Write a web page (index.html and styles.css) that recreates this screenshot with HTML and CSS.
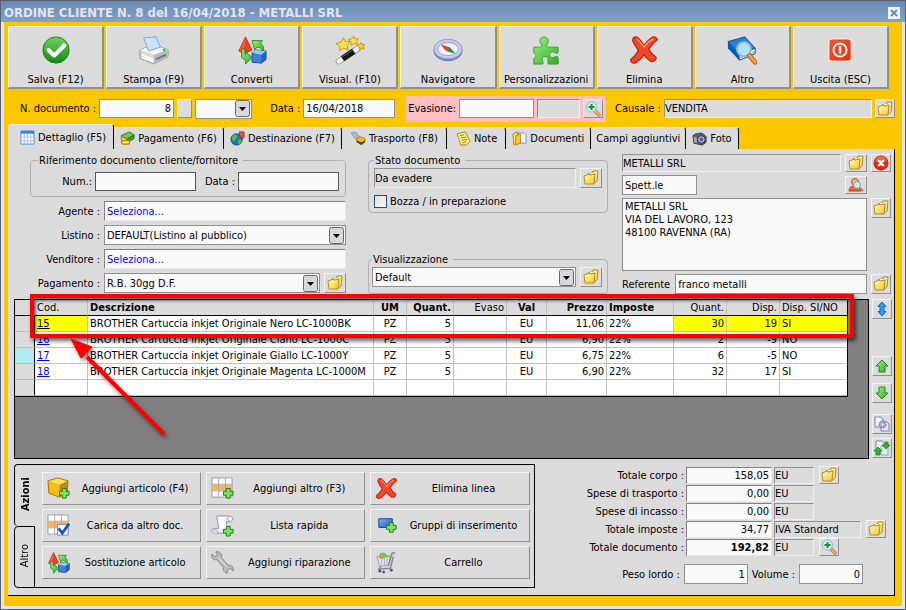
FILE: index.html
```html
<!DOCTYPE html>
<html lang="it">
<head>
<meta charset="utf-8">
<title>Ordine cliente</title>
<link rel="stylesheet" href="styles.css">
</head>
<body>
<svg class="sprite" aria-hidden="true">
  <defs>
    <linearGradient id="g-green" x1="0" y1="0" x2="0" y2="1"><stop offset="0" stop-color="#6fd35a"/><stop offset="1" stop-color="#0f8a18"/></linearGradient>
    <linearGradient id="g-lime" x1="0" y1="0" x2="1" y2="1"><stop offset="0" stop-color="#a4ee7c"/><stop offset="1" stop-color="#2fae2b"/></linearGradient>
    <linearGradient id="g-red" x1="0" y1="0" x2="1" y2="1"><stop offset="0" stop-color="#ff8a68"/><stop offset="1" stop-color="#dd2306"/></linearGradient>
    <linearGradient id="g-blue" x1="0" y1="0" x2="1" y2="1"><stop offset="0" stop-color="#7fb8f2"/><stop offset="1" stop-color="#1a55b4"/></linearGradient>
    <linearGradient id="g-gold" x1="0" y1="0" x2="1" y2="1"><stop offset="0" stop-color="#fffbc0"/><stop offset="1" stop-color="#f2c62c"/></linearGradient>
  </defs>
  <symbol id="i-ok" viewBox="0 0 32 32"><circle cx="16" cy="16" r="14" fill="url(#g-green)" stroke="#1f7d22"/><path d="M8 16l6 6L25 11" fill="none" stroke="#fff" stroke-width="4.5" stroke-linecap="round" stroke-linejoin="round"/></symbol>
  <symbol id="i-print" viewBox="0 0 32 32"><path d="M1 16l9-4 4 3 8-3 9 4v7l-15 8-15-6z" fill="#d9d9dc" stroke="#98989c"/><path d="M1 16l15 5 15-5-8-3-9 3-5-3z" fill="#f6f6f7"/><path d="M5 3l13-1 5 11-13 4z" fill="#c9e2fb" stroke="#7fa3cf"/><path d="M16 21l15-5v7l-15 8z" fill="#b9b9be"/><path d="M3 21l12 5M3 24l12 4" stroke="#fff" stroke-width="2"/><path d="M18 26l11-5" stroke="#77777d" stroke-width="2"/><circle cx="27" cy="16" r="1.5" fill="#35bd2a"/></symbol>
  <symbol id="i-convert" viewBox="0 0 32 32"><path d="M9 2L2 17l6 3 8-4z" fill="url(#g-red)" stroke="#c0301c"/><path d="M9 2l-1 18 8-4z" fill="#e8411f"/><path d="M16 19l4-3 11 1v9l-5 4-10-1z" fill="#3f7fd9" stroke="#1c4b9c"/><path d="M16 19l4-3 11 1-5 4z" fill="#9cc6f7"/><path d="M26 21l5-4v9l-5 4z" fill="#235fb8"/><path d="M5 15v9l4 3v4l7-7-7-6v3l-1-6z" fill="url(#g-lime)" stroke="#1f8a22"/><path d="M16 6h11l-2 3c3 2 4 4 3 8-2-3-4-4-7-4l-2 3z" fill="url(#g-lime)" stroke="#1f8a22"/></symbol>
  <symbol id="i-wand" viewBox="0 0 32 32"><path d="M4 28L25 14" stroke="#8d8d8d" stroke-width="6.5" stroke-linecap="round"/><path d="M4 28L25 14" stroke="#f4f4f4" stroke-width="5" stroke-linecap="round"/><path d="M8 25.300L20 17.300" stroke="#181818" stroke-width="6.500"/><path d="M8 23l11-7" stroke="#666" stroke-width="1"/><path d="M9 3l2 4 5 0-3 4 1 5-5-2-4 3 0-5-4-3 5-1z" fill="#ffe14a" stroke="#c99400"/><path d="M20 1l1 3 4 0-2 3 1 3-4-1-3 2 0-4-3-2 4-1z" fill="#ffe14a" stroke="#c99400"/><path d="M28 8l1 2 3 0-2 2 1 3-3-1-2 2 0-3-2-2 3-1z" fill="#ffd42a" stroke="#c99400"/></symbol>
  <symbol id="i-compass" viewBox="0 0 32 32"><ellipse cx="16" cy="17" rx="15" ry="10.500" fill="#8587c2" stroke="#7072a8"/><ellipse cx="16" cy="15" rx="15" ry="10.500" fill="#c8caee" stroke="#8f91c8"/><ellipse cx="16" cy="15" rx="11" ry="7" fill="#eef2fd" stroke="#9a9cce"/><path d="M8 10l10 3-4 4z" fill="#ef3b2a"/><path d="M24 20l-10-3 4-4z" fill="#1f8f36"/></symbol>
  <symbol id="i-puzzle" viewBox="0 0 32 32"><path d="M3 13h7c2 0 2-1 1-3-3-4-1-8 3-8s6 4 3 8c-1 2 0 3 2 3h10v5c0 2-1 2-3 1-3-2-6-1-6 2s3 4 6 2c2-1 3 0 3 2v6h-10c-1 0-1-1-1-2 1-3 0-6-3-6s-4 3-2 6c0 1 0 2-1 2H3v-6c3-2 3-4 0-6z" fill="url(#g-lime)" stroke="#35a02f"/></symbol>
  <symbol id="i-x" viewBox="0 0 32 32"><path d="M8 2c3 2 6 6 8 9 3-4 6-7 10-9 3 0 4 2 4 3-4 3-7 7-9 10 2 4 5 7 8 9 0 3-3 5-6 4-3-2-6-5-7-7-3 4-6 7-10 9-3 0-5-2-4-4 4-3 7-7 8-10-3-4-5-7-6-10 0-3 2-4 4-4z" fill="#f0482a" stroke="#c4260c" stroke-width="1.500"/><path d="M8 4c3 2 6 6 8 9 3-4 6-7 10-9" fill="none" stroke="#ff967a" stroke-width="1.500"/></symbol>
  <symbol id="i-book" viewBox="0 0 32 32"><path d="M1 7l18-5 11 12-17 7z" fill="#2c7fd6" stroke="#0d4b9e"/><path d="M1 7v7l12 13 0-6z" fill="#0d57b0"/><path d="M13 21l17-7v6l-17 7z" fill="#e8f2fc" stroke="#0d4b9e"/><path d="M13 25l17-7" stroke="#7aa3cf"/><circle cx="18" cy="15" r="7.500" fill="#c4ecfa" fill-opacity=".9" stroke="#8ab8d3" stroke-width="2"/><path d="M24 22l6 7" stroke="#b95a12" stroke-width="5" stroke-linecap="round"/><path d="M24 22l6 7" stroke="#ffa04c" stroke-width="3" stroke-linecap="round"/></symbol>
  <symbol id="i-power" viewBox="0 0 32 32"><rect x="4" y="4" width="24" height="24" rx="3" fill="url(#g-red)" stroke="#f8e3de" stroke-width="1.500"/><rect x="5" y="5" width="22" height="22" rx="2" fill="#dd3c18" fill-opacity=".6"/><circle cx="16" cy="16" r="7" fill="none" stroke="#fff" stroke-width="2"/><path d="M16 12v8" stroke="#fff" stroke-width="2.500"/></symbol>
  <symbol id="i-folder" viewBox="0 0 16 16"><path d="M5 4l4-1 1-2 5 0-1 10-4 3z" fill="#fbe27a" stroke="#b98c1c"/><path d="M7 3.500h3l1-1h3" stroke="#fffad0"/><path d="M1 6l3-1 1-1 2 1 5-1-1 10-9 0z" fill="url(#g-gold)" stroke="#b98c1c"/></symbol>
  <symbol id="i-find" viewBox="0 0 16 16"><path d="M9.500 9.500l4.500 4.500" stroke="#b8763f" stroke-width="3.500" stroke-linecap="round"/><path d="M10 10l4 4" stroke="#f8ac7b" stroke-width="2" stroke-linecap="round"/><circle cx="6.500" cy="6" r="5" fill="#d9f1fb" stroke="#88b5d0"/><path d="M6.500 3v6M3.500 6h6" stroke="#189427" stroke-width="2"/></symbol>
  <symbol id="i-cancel" viewBox="0 0 16 16"><circle cx="8" cy="8" r="7" fill="#e32d12" stroke="#b51808"/><path d="M2 7a6 6 0 0 1 12 0c-4-2-8-2-12 0z" fill="#ff8a68" fill-opacity=".6"/><path d="M6 6l4 4M10 6l-4 4" stroke="#fff" stroke-width="2.500" stroke-linecap="round"/></symbol>
  <symbol id="i-user" viewBox="0 0 16 16"><path d="M1 14c0-4 3-5 6-5s6 2 6 5z" fill="#f0622c" stroke="#b33c12"/><circle cx="7" cy="5" r="3.500" fill="#f5b676" stroke="#a95b25"/><circle cx="9" cy="8" r="3.500" fill="#c9eafa" stroke="#6c9cc0"/><path d="M12 11l3 3" stroke="#d97a2f" stroke-width="2"/></symbol>
  <symbol id="i-sheet" viewBox="0 0 16 16"><path d="M1 1h14v14H1z" fill="#fff" stroke="#4c8fe0"/><path d="M1 1h14v3H1z" fill="#2f86e8"/><path d="M1 7.500h14M1 11.500h14M4.500 4v11M8 4v11M11.500 4v11" stroke="#a9c0e4"/></symbol>
  <symbol id="i-money" viewBox="0 0 16 16"><path d="M1 5l9-4 5 3-8 5z" fill="#6ec94f" stroke="#2b7a1c"/><path d="M7 9l8-5v4l-8 5z" fill="#3f9a30" stroke="#2b7a1c"/><path d="M1 6l6 2v6l-5-1z" fill="#f6d84c" stroke="#a87c08"/><path d="M2 10h8v4H2z" fill="#f4cf36" stroke="#a87c08"/><path d="M3 12h6" stroke="#fff3a8"/></symbol>
  <symbol id="i-globe" viewBox="0 0 16 16"><circle cx="7" cy="9" r="6" fill="#2270c4" stroke="#174a86"/><path d="M3 5c3-2 5-1 5 1s-3 2-3 5c-3-1-4-3-2-6zM9 9l3 0c1 3-1 4-2 5-2-1-2-3-1-5z" fill="#4fc046"/><path d="M10 1h5v5l-2 3-1-3-2-1z" fill="#ef5a32" stroke="#a92c12"/></symbol>
  <symbol id="i-truck" viewBox="0 0 16 16"><path d="M0 2l5-1 4 5-4 3z" fill="#b7b7b7" stroke="#9a9a9a"/><path d="M6 8l4-2 5 2v3l-4 3-5-3z" fill="#f6b52a" stroke="#b27a10"/><path d="M6 10l5 2 4-2v2l-4 3-5-3z" fill="#5c4225"/></symbol>
  <symbol id="i-note" viewBox="0 0 16 16"><path d="M1 3l9-2 5 10-4 4-6 0z" fill="#fff07c" stroke="#a38713"/><path d="M4 5l5-1M5 7.500l6-1M6 10l6-1M7 12.500l4-1" stroke="#957d1c"/></symbol>
  <symbol id="i-docs" viewBox="0 0 16 16"><path d="M1 3l5-2v11l-4 3z" fill="#ffe172" stroke="#b8860b"/><path d="M7 2h6l2 2v9H7z" fill="#eaf3fd" stroke="#7a95bb"/><path d="M4 5l5-2v10l-5 2z" fill="#f6cc3c" stroke="#b8860b"/></symbol>
  <symbol id="i-camera" viewBox="0 0 16 16"><path d="M1 5l3-2 3 0 1-1 4 1 3 3v6l-4 3-9-2z" fill="#62626c" stroke="#34343c"/><path d="M2 6l3 1v6l-3-1z" fill="#a4a4b4"/><circle cx="10" cy="9" r="4" fill="#b4b8d8" stroke="#2f2f3a"/><circle cx="10" cy="9" r="2" fill="#5560a0"/></symbol>
  <symbol id="i-updown" viewBox="0 0 16 16"><path d="M8 1l4 4.500h-2v5h2L8 15l-4-4.500h2v-5H4z" fill="#2f9df4" stroke="#1665b8"/></symbol>
  <symbol id="i-up" viewBox="0 0 16 16"><path d="M8 2l6 6h-3v6H5V8H2z" fill="url(#g-lime)" stroke="#1d8c1b"/></symbol>
  <symbol id="i-down" viewBox="0 0 16 16"><path d="M8 14l6-6h-3V2H5v6H2z" fill="url(#g-lime)" stroke="#1d8c1b"/></symbol>
  <symbol id="i-gear" viewBox="0 0 16 16"><path d="M1 1h6l2 2v8H1z" fill="#f2f7ff" stroke="#6d86b8"/><path d="M7 6h6l2 2v7H7z" fill="#e4edfb" stroke="#6d86b8"/><circle cx="8.500" cy="8.500" r="3.500" fill="#a9a9d4" stroke="#62629a" stroke-dasharray="2 1"/><circle cx="8.500" cy="8.500" r="1" fill="#fff"/></symbol>
  <symbol id="i-swap" viewBox="0 0 16 16"><path d="M2 1h6l2 2v8H2z" fill="#f2f7ff" stroke="#6d86b8"/><path d="M7 6h7v9H7z" fill="#e4edfb" stroke="#8da2c8"/><path d="M4 7l4 4H6v4H2v-4H0zM12 9l4-4h-2V2h-3v3H8z" fill="#31b52b" stroke="#187a18" stroke-width=".7"/></symbol>
  <symbol id="i-plus" viewBox="0 0 12 12"><path d="M4 1h4v3h3v4H8v3H4V8H1V4h3z" fill="#7be45c" stroke="#12801a"/></symbol>
  <symbol id="i-box" viewBox="0 0 24 24"><path d="M1 4l10-3 11 3-9 4z" fill="#ffe45a"/><path d="M1 4l12 4v13L2 17z" fill="#f2bd14"/><path d="M13 8l9-4-1 12-8 5z" fill="#c58a05"/><path d="M1 4l10-3 11 3-1 12-8 5L2 17z" fill="none" stroke="#a87406"/><use href="#i-plus" x="12" y="11" width="12" height="12"/></symbol>
  <symbol id="i-gridadd" viewBox="0 0 24 24"><path d="M1 1h21v20H1z" fill="#fff" stroke="#9b9bab"/><path d="M1 8h21v6H1z" fill="#ffb452"/><path d="M1 7.500h21M1 14.500h21M8 1v20M15 1v20" stroke="#a9a9b5"/><use href="#i-plus" x="12" y="11" width="12" height="12"/></symbol>
  <symbol id="i-gridok" viewBox="0 0 24 24"><path d="M1 1h21v20H1z" fill="#fff" stroke="#9b9bab"/><path d="M1 8h21v6H1z" fill="#ffb452"/><path d="M1 7.500h21M1 14.500h21M8 1v20M15 1v20" stroke="#a9a9b5"/><path d="M11 11h11v11H11z" fill="#fff" stroke="#7a8aa8"/><path d="M12 15l4 5 7-10" fill="none" stroke="#1457c0" stroke-width="3"/></symbol>
  <symbol id="i-scroll" viewBox="0 0 24 24"><path d="M6 2h13c5 0 5 6 0 6h-3l2 12H5c-5 0-6-5-2-5h5z" fill="#eef0fa" stroke="#9497ae"/><path d="M8 3h7l1 12H9z" fill="#fff"/><path d="M19 3c-3 0-2 4 0 4M2 17c3-1 6 0 5 3" fill="none" stroke="#9497ae"/><use href="#i-plus" x="12" y="12" width="12" height="12"/></symbol>
  <symbol id="i-wrench" viewBox="0 0 24 24"><path d="M5 1c4-1 7 2 6 6l7 8c4-1 6 3 5 6l-3-3-3 2 0 3c-3 0-5-3-4-6L6 9C2 10 0 7 1 3l3 3 3-2z" fill="#bdbdbd" stroke="#868686"/><path d="M8 7l9 10" stroke="#eee"/></symbol>
  <symbol id="i-group" viewBox="0 0 24 24"><path d="M4 5h14v9H4z" fill="url(#g-blue)" stroke="#123f8c"/><use href="#i-plus" x="11" y="8" width="12" height="12"/></symbol>
  <symbol id="i-cart" viewBox="0 0 24 24"><path d="M2 6l14-1-2 10-9 1z" fill="#e6e2f6" stroke="#9a98ac"/><path d="M4 5c2-5 7-4 8-1l4 2-11 2z" fill="#5fd048"/><path d="M5 5h4v3H5z" fill="#f58a3c"/><path d="M14 15l4-13h3M6 16l-2 3 12-1 3-12" fill="none" stroke="#85858f" stroke-width="1.500"/><path d="M7 7v8M10 7v8M13 7l-1 8" stroke="#b3b0cc"/><circle cx="5" cy="21" r="1.500" fill="#55555c"/><circle cx="9" cy="22" r="1.500" fill="#55555c"/><circle cx="17" cy="20" r="1.500" fill="#55555c"/></symbol>
</svg>

<div class="window">
  <header class="titlebar">
    <h1>ORDINE CLIENTE N. 8 del 16/04/2018 - METALLI SRL</h1>
    <button class="close" aria-label="Chiudi"><svg viewBox="0 0 12 12"><path d="M3 3l6 6M9 3l-6 6" stroke="#6c8cb4" stroke-width="2"/></svg></button>
  </header>
  <main class="body">
    <nav class="toolbar">
      <button><svg><use href="#i-ok"/></svg>Salva (F12)</button>
      <button><svg><use href="#i-print"/></svg>Stampa (F9)</button>
      <button><svg><use href="#i-convert"/></svg>Converti</button>
      <button><svg><use href="#i-wand"/></svg>Visual. (F10)</button>
      <button><svg><use href="#i-compass"/></svg>Navigatore</button>
      <button><svg><use href="#i-puzzle"/></svg>Personalizzazioni</button>
      <button><svg><use href="#i-x"/></svg>Elimina</button>
      <button><svg><use href="#i-book"/></svg>Altro</button>
      <button><svg><use href="#i-power"/></svg>Uscita (ESC)</button>
    </nav>

    <div class="docbar">
      <div class="doc-number">
        <label for="ndoc">N. documento :</label>
        <input id="ndoc" class="num w-number" value="8">
        <button class="blank" aria-label="Numerazione"></button>
        <select class="w-series" aria-label="Serie"><option></option></select>
      </div>
      <div class="doc-date">
        <label for="date">Data :</label>
        <input id="date" class="w-date" value="16/04/2018">
      </div>
      <div class="evasion">
        <label for="eva">Evasione:</label>
        <input id="eva" class="w-number">
        <input class="locked w-state" readonly aria-label="Stato evasione">
        <button class="icon" aria-label="Cerca evasione"><svg><use href="#i-find"/></svg></button>
      </div>
      <div class="reason">
        <label for="cau">Causale :</label>
        <input id="cau" class="locked grow" readonly value="VENDITA">
        <button class="icon" aria-label="Scegli causale"><svg><use href="#i-folder"/></svg></button>
      </div>
    </div>

    <div class="tabs" role="tablist">
      <button role="tab" class="selected" aria-selected="true"><svg><use href="#i-sheet"/></svg>Dettaglio (F5)</button>
      <button role="tab"><svg><use href="#i-money"/></svg>Pagamento (F6)</button>
      <button role="tab"><svg><use href="#i-globe"/></svg>Destinazione (F7)</button>
      <button role="tab" class="roomy"><svg><use href="#i-truck"/></svg>Trasporto (F8)</button>
      <button role="tab" class="roomy"><svg><use href="#i-note"/></svg>Note</button>
      <button role="tab"><svg><use href="#i-docs"/></svg>Documenti</button>
      <button role="tab" class="plain">Campi aggiuntivi</button>
      <button role="tab"><svg><use href="#i-camera"/></svg>Foto</button>
    </div>

    <section class="panel">
      <div class="details">
        <div class="refs">
          <fieldset class="ref-doc">
            <legend>Riferimento documento cliente/fornitore</legend>
            <label for="rnum">Num.:</label><input id="rnum" class="dark">
            <label for="rdat">Data :</label><input id="rdat" class="dark">
          </fieldset>
          <div class="line"><label for="age">Agente :</label><input id="age" class="sunken link grow" value="Seleziona..."></div>
          <div class="line"><label for="lis">Listino :</label><select id="lis" class="grow"><option>DEFAULT(Listino al pubblico)</option></select></div>
          <div class="line"><label for="ven">Venditore :</label><input id="ven" class="sunken link grow" value="Seleziona..."></div>
          <div class="line"><label for="pag">Pagamento :</label><select id="pag" class="grow"><option>R.B. 30gg D.F.</option></select><button class="icon wide" aria-label="Scegli pagamento"><svg><use href="#i-folder"/></svg></button></div>
        </div>

        <div class="status">
          <fieldset class="state">
            <legend>Stato documento</legend>
            <div class="pair"><input class="locked grow" readonly value="Da evadere" aria-label="Stato documento"><button class="icon wide" aria-label="Scegli stato"><svg><use href="#i-folder"/></svg></button></div>
            <label class="check"><input type="checkbox">Bozza / in preparazione</label>
          </fieldset>
          <fieldset class="view">
            <legend>Visualizzazione</legend>
            <div class="pair"><select class="grow" aria-label="Visualizzazione"><option>Default</option></select><button class="icon wide" aria-label="Scegli visualizzazione"><svg><use href="#i-folder"/></svg></button></div>
          </fieldset>
        </div>

        <div class="customer">
          <div class="pair short"><input class="locked grow" readonly value="METALLI SRL" aria-label="Cliente"><button class="icon wide" aria-label="Scegli cliente"><svg><use href="#i-folder"/></svg></button></div>
          <button class="icon short" aria-label="Togli cliente"><svg><use href="#i-cancel"/></svg></button>
          <div class="pair spread"><input class="w-number" value="Spett.le" aria-label="Titolo"><button class="icon wide short" aria-label="Cerca contatto"><svg><use href="#i-user"/></svg></button></div>
          <span></span>
          <textarea aria-label="Indirizzo">METALLI SRL
VIA DEL LAVORO, 123
48100 RAVENNA (RA)</textarea>
          <button class="icon" aria-label="Scegli indirizzo"><svg><use href="#i-folder"/></svg></button>
          <div class="pair referent"><label for="refe">Referente</label><input id="refe" class="grow" value="franco metalli"></div>
          <button class="icon" aria-label="Scegli referente"><svg><use href="#i-folder"/></svg></button>
        </div>
      </div>

      <div class="lines">
        <div class="sheet">
          <table>
            <colgroup><col class="c-mark"><col class="c-code"><col><col class="c-um"><col class="c-qty"><col class="c-evaso"><col class="c-val"><col class="c-price"><col class="c-tax"><col class="c-stock"><col class="c-stock"><col class="c-avail"></colgroup>
            <thead><tr><th></th><th>Cod.</th><th class="b">Descrizione</th><th class="b c">UM</th><th class="b r">Quant.</th><th class="r">Evaso</th><th class="b c">Val</th><th class="b r">Prezzo</th><th class="b">Imposte</th><th class="r">Quant.</th><th class="r">Disp.</th><th>Disp. SI/NO</th></tr></thead>
            <tbody>
              <tr class="marked"><th></th><td class="hot"><a href="#">15</a></td><td>BROTHER Cartuccia inkjet Originale Nero LC-1000BK</td><td class="c">PZ</td><td class="r">5</td><td></td><td class="c">EU</td><td class="r">11,06</td><td>22%</td><td class="r hot">30</td><td class="r hot">19</td><td class="hot">SI</td></tr>
              <tr><th></th><td><a href="#">16</a></td><td>BROTHER Cartuccia inkjet Originale Ciano LC-1000C</td><td class="c">PZ</td><td class="r">5</td><td></td><td class="c">EU</td><td class="r">6,90</td><td>22%</td><td class="r">2</td><td class="r">-9</td><td>NO</td></tr>
              <tr><th class="current"></th><td><a href="#">17</a></td><td>BROTHER Cartuccia inkjet Originale Giallo LC-1000Y</td><td class="c">PZ</td><td class="r">5</td><td></td><td class="c">EU</td><td class="r">6,75</td><td>22%</td><td class="r">6</td><td class="r">-5</td><td>NO</td></tr>
              <tr><th></th><td><a href="#">18</a></td><td>BROTHER Cartuccia inkjet Originale Magenta LC-1000M</td><td class="c">PZ</td><td class="r">5</td><td></td><td class="c">EU</td><td class="r">6,90</td><td>22%</td><td class="r">32</td><td class="r">17</td><td>SI</td></tr>
              <tr><th></th><td></td><td></td><td></td><td></td><td></td><td></td><td></td><td></td><td></td><td></td><td></td></tr>
            </tbody>
          </table>
          <div class="callout"></div>
          <svg class="arrow" viewBox="0 0 100 102"><path d="M94 96L17 19" stroke="#f00" stroke-width="4"/><path d="M1 1l21 8-11 11z" fill="#f00" stroke="#f00"/></svg>
        </div>
        <div class="side">
          <button class="icon" aria-label="Altezza"><svg><use href="#i-updown"/></svg></button>
          <span class="spring"></span>
          <button class="icon" aria-label="Su"><svg><use href="#i-up"/></svg></button>
          <button class="icon" aria-label="Giù"><svg><use href="#i-down"/></svg></button>
          <button class="icon set" aria-label="Opzioni"><svg><use href="#i-gear"/></svg></button>
          <button class="icon" aria-label="Aggiorna"><svg><use href="#i-swap"/></svg></button>
        </div>
      </div>

      <div class="bottom">
        <div class="actions">
          <div class="vtabs">
            <button class="on"><span>Azioni</span></button>
            <button><span>Altro</span></button>
          </div>
          <div class="action-grid">
            <button><svg><use href="#i-box"/></svg><span>Aggiungi articolo (F4)</span></button>
            <button><svg><use href="#i-gridadd"/></svg><span>Aggiungi altro (F3)</span></button>
            <button><svg><use href="#i-x"/></svg><span>Elimina linea</span></button>
            <button><svg><use href="#i-gridok"/></svg><span>Carica da altro doc.</span></button>
            <button><svg><use href="#i-scroll"/></svg><span>Lista rapida</span></button>
            <button><svg><use href="#i-group"/></svg><span>Gruppi di inserimento</span></button>
            <button><svg><use href="#i-convert"/></svg><span>Sostituzione articolo</span></button>
            <button><svg><use href="#i-wrench"/></svg><span>Aggiungi riparazione</span></button>
            <button><svg><use href="#i-cart"/></svg><span>Carrello</span></button>
          </div>
        </div>

        <div class="summary">
          <div class="totals">
            <label for="t1">Totale corpo :</label><input id="t1" class="sunken num" value="158,05">
            <div class="unit"><input class="locked" readonly value="EU" aria-label="Valuta corpo"><button class="icon" aria-label="Dettaglio corpo"><svg><use href="#i-folder"/></svg></button></div>
            <label for="t2">Spese di trasporto :</label><input id="t2" class="sunken num" value="0,00">
            <div class="unit"><input class="locked" readonly value="EU" aria-label="Valuta trasporto"></div>
            <label for="t3">Spese di incasso :</label><input id="t3" class="sunken num" value="0,00">
            <div class="unit"><input class="locked" readonly value="EU" aria-label="Valuta incasso"></div>
            <label for="t4">Totale imposte :</label><input id="t4" class="sunken num" value="34,77">
            <div class="unit"><input class="locked grow" readonly value="IVA Standard" aria-label="Aliquota"><button class="icon" aria-label="Scegli aliquota"><svg><use href="#i-folder"/></svg></button></div>
            <label for="t5">Totale documento :</label><input id="t5" class="sunken num b" value="192,82">
            <div class="unit"><input class="locked" readonly value="EU" aria-label="Valuta documento"><button class="icon" aria-label="Dettaglio totale"><svg><use href="#i-find"/></svg></button></div>
          </div>
          <div class="weights">
            <label for="peso">Peso lordo :</label><input id="peso" class="num" value="1">
            <label for="vol">Volume :</label><input id="vol" class="num" value="0">
          </div>
        </div>
      </div>
    </section>
  </main>
</div>
</body>
</html>
```
FILE: styles.css
```css
:root {
  --face: #dcdcdc;
  --paper: #fafafa;
  --edge: #909090;
  --yellow: #fbc800;
}

* { box-sizing: border-box; }

body {
  margin: 0;
  font: 11px/13px "DejaVu Sans Condensed", "Liberation Sans", sans-serif;
  color: #000;
}

.sprite { position: absolute; width: 0; height: 0; }

input, select, button, textarea {
  margin: 0;
  font: inherit;
  color: inherit;
  border-radius: 0;
}

input, select, textarea {
  min-width: 0;
  height: 20px;
  padding: 0 2px;
  border: 1px solid var(--edge);
  background: var(--paper);
}

textarea { resize: none; }

select {
  appearance: none;
  background: var(--paper) url("data:image/svg+xml,%3Csvg xmlns='http://www.w3.org/2000/svg' width='16' height='17'%3E%3Crect x='.5' y='.5' width='14' height='16' rx='2' fill='%23d8d8dc' stroke='%2366666c'/%3E%3Cpath d='M4 7h7l-3.500 4z'/%3E%3C/svg%3E") no-repeat right 0 center;
}

button {
  padding: 0;
  background: var(--face);
  border: 1px solid;
  border-color: #f4f4f4 var(--edge) var(--edge) #f4f4f4;
}

label, button, legend, th, td { white-space: nowrap; }

.grow { flex: 1; }
.num { text-align: right; }
.b { font-weight: bold; }
.link { color: #00f; }
.dark { border-color: #555; }
.sunken { border-color: #808080 #e8e8e8 #e8e8e8 #808080; }

.locked {
  background: var(--face);
  padding: 0;
  border-color: #909090 #f0f0f0 #f0f0f0 #909090;
}

.w-number { width: 75px; }
.w-series { width: 57px; }
.w-date { width: 92px; }
.w-state { width: 43px; }

.icon {
  display: grid;
  place-items: center;
  flex: none;
  width: 20px;
  height: 20px;
}

.icon svg { width: 16px; height: 16px; }
.icon.wide { width: 22px; }

/* Window frame */
.window {
  display: flex;
  flex-direction: column;
  min-height: 100vh;
  border: 1px solid #5a6070;
  background: #e4e6ec;
}

.titlebar {
  display: flex;
  align-items: center;
  justify-content: space-between;
  height: 21px;
  padding: 2px 5px 0 3px;
  background: linear-gradient(#6689b5, #84a2c8);
}

.titlebar h1 {
  margin: 0;
  font-size: 13px;
  line-height: 16px;
  white-space: nowrap;
  color: #e2e6ee;
}

.close {
  width: 12px;
  height: 12px;
  border: 0;
  background: #f0f2f6;
}

.close svg { display: block; width: 12px; height: 12px; }

.body {
  flex: 1;
  display: flex;
  flex-direction: column;
  margin: 0 3px 3px;
  padding: 4px 7px 10px 4px;
  background: var(--yellow);
}

/* Toolbar */
.toolbar {
  display: grid;
  grid-template-columns: repeat(9, 1fr);
  gap: 2px;
  padding-right: 6px;
}

.toolbar button {
  display: flex;
  flex-direction: column;
  align-items: center;
  gap: 8px;
  height: 63px;
  padding-top: 8px;
  border-right-width: 2px;
  border-bottom-width: 2px;
}

.toolbar svg { width: 30px; height: 30px; }

/* Document bar */
.docbar {
  display: flex;
  align-items: center;
  height: 35px;
  padding-left: 12px;
  padding-top: 4px;
}

.docbar > div { display: flex; align-items: center; gap: 3px; }
.docbar input, .docbar .icon { height: 19px; }
.docbar .doc-date { margin-left: 18px; }

.docbar .evasion {
  height: 26px;
  margin-left: 11px;
  padding: 0 3px 0 2px;
  background: #ffbfc0;
}

.docbar .reason { flex: 1; margin-left: 9px; }

.blank { width: 15px; height: 19px; }

/* Tabs */
.tabs { display: flex; align-items: flex-end; }

.tabs button {
  display: flex;
  align-items: center;
  gap: 3px;
  height: 22px;
  padding: 0 6px;
  border: 0;
  border-top: 1px solid #f0f0f0;
  border-right: 1px solid #000;
  border-radius: 3px 3px 0 0;
}

.tabs button.selected { height: 25px; padding: 0 7px 0 12px; }
.tabs button.roomy { padding: 0 8px 0 9px; }
.tabs button.plain { padding: 0 5px; }
.tabs svg { width: 15px; height: 15px; }

/* Panel */
.panel {
  flex: 1;
  display: flex;
  flex-direction: column;
  gap: 5px;
  padding: 5px 2px 7px 6px;
  background: var(--face);
  border-right: 1px solid #000;
  border-bottom: 1px solid #000;
}

.details {
  display: grid;
  grid-template-columns: minmax(0, 324fr) minmax(0, 240fr) minmax(0, 269fr);
  column-gap: 14px;
  height: 140px;
  padding: 0 1px 0 16px;
}

fieldset {
  min-width: 0;
  margin: 0;
  border: 1px solid #b0b0b0;
  border-radius: 4px;
}

legend { padding: 0 5px 0 1px; }

.refs {
  display: flex;
  flex-direction: column;
  gap: 4px;
  padding-right: 8px;
}

.ref-doc {
  display: flex;
  align-items: center;
  gap: 3px;
  padding: 5px 6px 5px 7px;
}

.ref-doc label { width: 54px; text-align: right; }
.ref-doc label ~ label { width: 36px; }
.ref-doc input { flex: 1; height: 19px; }

.line { display: flex; align-items: center; gap: 4px; }
.line label { width: 70px; text-align: right; }

.status {
  display: flex;
  flex-direction: column;
  justify-content: space-between;
}

.state { padding: 1px 5px 4px 5px; }
.view { padding: 1px 5px 6px 3px; }

.pair { display: flex; gap: 4px; align-items: center; }
.pair.spread { justify-content: space-between; }
.short, .pair.short > * { height: 18px; }

.check {
  display: flex;
  align-items: center;
  gap: 3px;
  margin-top: 7px;
}

.check input {
  appearance: none;
  width: 13px;
  height: 13px;
  border: 1px solid #1c5180;
  background: linear-gradient(135deg, #dcdcd7, #fff);
}

.customer {
  display: grid;
  grid-template-columns: minmax(0, 1fr) 20px;
  grid-template-rows: 18px 20px 1fr 20px;
  gap: 3px 4px;
}

.customer textarea { width: 100%; height: 100%; padding-top: 1px; }
.customer .pair.referent { gap: 5px; }

/* Order lines */
.lines { flex: 1; display: flex; gap: 3px; }

.sheet {
  position: relative;
  flex: 1;
  padding-right: 20px;
  background: #808080;
  border: 1px solid #000;
}

table {
  width: 100%;
  table-layout: fixed;
  border-collapse: separate;
  border-spacing: 0;
  border-right: 1px solid #000;
  border-bottom: 1px solid #000;
  background: #fff;
}

th, td {
  height: 16px;
  padding: 0 2px;
  overflow: hidden;
  line-height: 13px;
  text-align: left;
  font-weight: normal;
  border-right: 1px solid #c0c0c0;
  border-bottom: 1px solid #c0c0c0;
}

th { background: var(--face); }
thead th { border-bottom-color: #000; }
tbody th { border-right-color: #000; }
tbody td:last-child, thead th:last-child { border-right: 0; }
th.b { font-weight: bold; }
.c { text-align: center; }
.r { text-align: right; }
.hot { background: #ff0; }
.current { background: #afeeee; }
td a { color: #00f; }
.marked a { color: #000; }

.c-mark { width: 20px; }
.c-code { width: 53px; }
.c-um { width: 33px; }
.c-qty { width: 47px; }
.c-evaso { width: 53px; }
.c-val { width: 40px; }
.c-price { width: 60px; }
.c-tax { width: 67px; }
.c-stock { width: 53px; }
.c-avail { width: 67px; }

/* Annotation drawn over the order lines */
.callout {
  position: absolute;
  top: -6px;
  left: 15px;
  right: 14px;
  height: 44px;
  border: 4px solid #f00;
  box-shadow: 2px 3px 4px rgba(0, 0, 0, .6), inset 2px 3px 3px rgba(0, 0, 0, .5);
}

.arrow {
  position: absolute;
  top: 38px;
  left: 55px;
  width: 100px;
  height: 102px;
  filter: drop-shadow(2px 3px 2px rgba(0, 0, 0, .5));
}

.side { display: flex; flex-direction: column; gap: 7px; padding-bottom: 1px; }
.side .spring { flex: 1; }
.side .set { margin-top: 4px; }
.side .set + .icon { margin-top: -3px; }

/* Actions */
.bottom { display: flex; }

.actions { flex: 520; display: flex; }
.vtabs { display: flex; flex-direction: column; width: 21px; }

.vtabs button {
  flex: 1;
  border: 1px solid #000;
  border-radius: 4px 0 0 4px;
}

.vtabs .on {
  border-right: 0;
  border-bottom: 0;
  font-weight: bold;
}

.vtabs span {
  writing-mode: vertical-rl;
  transform: rotate(180deg);
}

.action-grid {
  flex: 1;
  display: grid;
  grid-template-columns: repeat(3, 1fr);
  gap: 4px 5px;
  padding: 7px 4px 8px 7px;
  border: 1px solid #000;
  border-left: 0;
}

.action-grid button {
  display: flex;
  align-items: center;
  height: 33px;
  padding-left: 4px;
}

.action-grid svg { width: 23px; height: 23px; }
.action-grid span { flex: 1; text-align: center; }

/* Totals */
.summary { flex: 351; padding: 2px 6px 0 0; }

.totals {
  display: grid;
  grid-template-columns: 1fr 86px 112px;
  grid-auto-rows: 18px;
  align-items: center;
  column-gap: 2px;
}

.totals label { text-align: right; }
.totals input { height: 17px; }
.unit { display: flex; align-items: center; gap: 5px; }
.unit input { width: 40px; }
.unit input.grow { width: auto; }
.unit .icon { height: 18px; }

.weights {
  display: flex;
  align-items: center;
  justify-content: flex-end;
  gap: 4px;
  margin-top: 8px;
  padding-right: 23px;
}

.weights input { width: 64px; }
```
